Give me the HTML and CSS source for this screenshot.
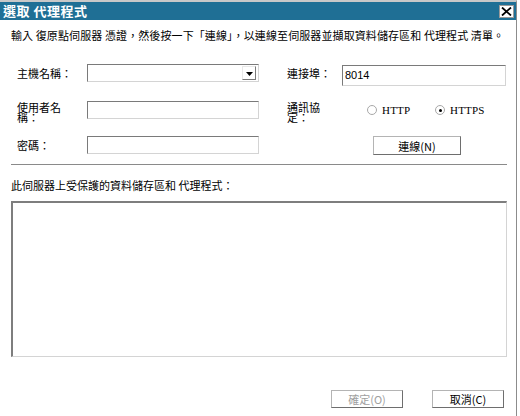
FILE: index.html
```html
<!DOCTYPE html>
<html>
<head>
<meta charset="utf-8">
<link rel="stylesheet" href="styles.css">
</head>
<body>
<div class="window">
  <div class="titlebar">
    <span class="title">選取 代理程式</span>
    <span class="close"><svg width="11" height="9" viewBox="0 0 11 9"><path d="M1 0.5 L10 8.5 M10 0.5 L1 8.5" stroke="#000" stroke-width="1.8" fill="none"/></svg></span>
  </div>
  <div class="content">
    <p class="intro">輸入 復原點伺服器 憑證，然後按一下「連線」，以連線至伺服器並擷取資料儲存區和 代理程式 清單。</p>
    <div class="form">
      <div class="label r1">主機名稱：</div>
      <div class="combo r1"><span class="drop"><svg width="7" height="4" viewBox="0 0 7 4"><path d="M0 0 H7 L3.5 4 Z" fill="#000"/></svg></span></div>
      <div class="label r1 right">連接埠：</div>
      <div class="input port r1">8014</div>

      <div class="label two r2">使用者名稱：</div>
      <div class="input r2 user"></div>
      <div class="label two r2 right">通訊協定：</div>
      <div class="radios r2">
        <span class="radio"><span class="circle"></span><span class="rtext">HTTP</span></span>
        <span class="radio https"><span class="circle on"></span><span class="rtext">HTTPS</span></span>
      </div>

      <div class="label r3">密碼：</div>
      <div class="input r3"></div>
      <div class="r3 right"></div>
      <div class="r3 btncell"><span class="btn connect">連線(N)</span></div>
    </div>
    <div class="sep"></div>
    <div class="listlabel">此伺服器上受保護的資料儲存區和 代理程式：</div>
    <div class="listbox"></div>
    <div class="footer">
      <span class="btn disabled">確定(O)</span>
      <span class="btn">取消(C)</span>
    </div>
  </div>
</div>
</body>
</html>
```
FILE: styles.css
```css
html, body {
  margin: 0;
  padding: 0;
  background: #ffffff;
}
body {
  font-family: "Noto Sans CJK TC", "Liberation Sans", sans-serif;
  font-size: 11px;
  color: #000;
}
.window {
  width: 517px;
  height: 416px;
  border-right: 1px solid #8c8c8c;
  border-top: 2px solid #c8c8c8;
  box-sizing: border-box;
  overflow: hidden;
}
.titlebar {
  height: 18px;
  background: #1f6f95;
  display: flex;
  align-items: center;
  justify-content: space-between;
  padding: 0 2px 0 3px;
}
.title {
  color: #fff;
  font-weight: bold;
  font-size: 13px;
  line-height: 18px;
  letter-spacing: 0.5px;
}
.close {
  width: 13px;
  height: 11px;
  background: #fff;
  border: 1px solid #9a9a9a;
  display: flex;
  align-items: center;
  justify-content: center;
}
.content {
  padding: 0 10px 0 11px;
}
.intro {
  margin: 8px 0 0 0;
  line-height: 14px;
  white-space: nowrap;
  letter-spacing: 0.1px;
}
.form {
  margin-top: 22px;
  padding-left: 6px;
  display: grid;
  grid-template-columns: 70px 172px 28px 55px 166px;
  grid-template-rows: 22px 22px 20px;
  row-gap: 14px;
}
.label {
  line-height: 18px;
  white-space: nowrap;
}
.label.right { grid-column: 4; }
.label.two {
  white-space: normal;
  width: 48px;
  line-height: 10px;
  padding-top: 2px;
  word-break: break-all;
}
.input, .combo {
  height: 18px;
  box-sizing: border-box;
  border-top: 1px solid #7a7a7a;
  border-left: 1px solid #7a7a7a;
  border-right: 1px solid #d4d4d4;
  border-bottom: 1px solid #d4d4d4;
  background: #fff;
}
.user { margin-top: 1px; }
.combo {
  display: flex;
  justify-content: flex-end;
  align-items: center;
  padding-right: 2px;
}
.drop {
  width: 14px;
  height: 14px;
  box-sizing: border-box;
  border-top: 1px solid #e8e8e8;
  border-left: 1px solid #e8e8e8;
  border-right: 1px solid #7a7a7a;
  border-bottom: 1px solid #7a7a7a;
  display: flex;
  align-items: center;
  justify-content: center;
  padding-top: 1px;
}
.port {
  grid-column: 5;
  width: 164px;
  height: 21px;
  margin-top: 1px;
  font-family: "Liberation Sans", sans-serif;
  font-size: 11px;
  line-height: 19px;
  padding-left: 2px;
}
.radios {
  grid-column: 5;
  display: flex;
  align-items: center;
  height: 22px;
  padding-left: 25px;
  padding-bottom: 2px;
  box-sizing: border-box;
}
.radio {
  display: flex;
  align-items: center;
  width: 68px;
}
.circle {
  width: 10px;
  height: 10px;
  box-sizing: border-box;
  border: 1px solid #a8a8a8;
  border-radius: 50%;
  margin-right: 5px;
  position: relative;
}
.circle.on::after {
  content: "";
  position: absolute;
  left: 2.5px;
  top: 2.5px;
  width: 3px;
  height: 3px;
  border-radius: 50%;
  background: #000;
}
.rtext {
  font-family: "Liberation Serif", serif;
  font-size: 11px;
  letter-spacing: 0.2px;
}
.btncell {
  grid-column: 5;
  padding-left: 31px;
}
.btn {
  display: inline-flex;
  align-items: center;
  justify-content: center;
  width: 88px;
  height: 19px;
  box-sizing: border-box;
  border-top: 1px solid #b4b4b4;
  border-left: 1px solid #b4b4b4;
  border-right: 1px solid #6e6e6e;
  border-bottom: 1px solid #6e6e6e;
  background: #fff;
  font-size: 11px;
}
.sep {
  margin-top: 8px;
  width: 496px;
  height: 1px;
  background: #8a8a8a;
}
.listlabel {
  margin-top: 13px;
  line-height: 14px;
}
.listbox {
  margin-top: 9px;
  width: 496px;
  height: 156px;
  box-sizing: border-box;
  border-top: 2px solid #7e7e7e;
  border-left: 2px solid #7e7e7e;
  border-right: 1px solid #d4d4d4;
  border-bottom: 1px solid #d4d4d4;
}
.footer {
  margin-top: 33px;
  display: flex;
  gap: 29px;
  padding-left: 320px;
}
.footer .btn {
  width: 72px;
  height: 18px;
}
.btn.disabled {
  color: #a0a0a0;
}
```
